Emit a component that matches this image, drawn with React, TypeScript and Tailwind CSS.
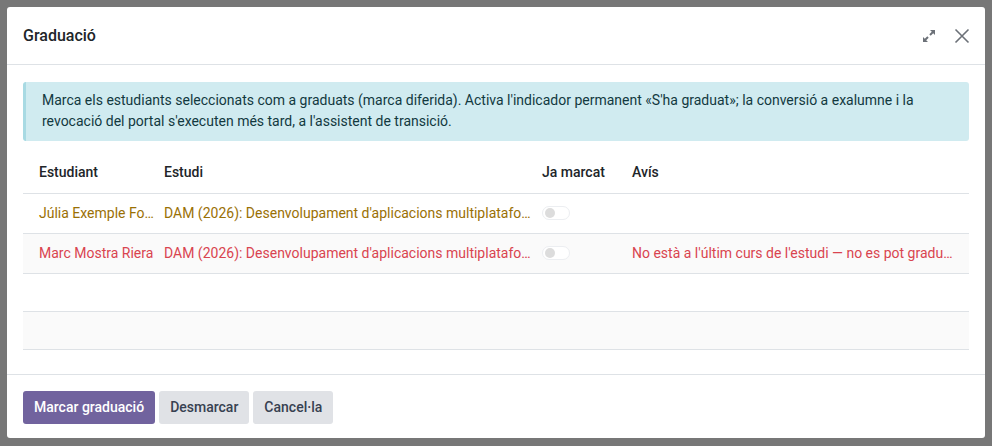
import React from "react";

const rows = [
  {
    student: "Júlia Exemple Font",
    study: "DAM (2026): Desenvolupament d'aplicacions multiplataforma",
    warning: "",
    color: "text-[#9a7005]",
  },
  {
    student: "Marc Mostra Riera",
    study: "DAM (2026): Desenvolupament d'aplicacions multiplataforma",
    warning: "No està a l'últim curs de l'estudi — no es pot graduar encara",
    color: "text-[#d9444f]",
  },
];

const Toggle = () => (
  <div className="w-[28px] h-[14px] rounded-full border border-[#eceef1] bg-white flex items-center pl-[2px]">
    <div className="w-[10px] h-[10px] rounded-full bg-[#dcdcdc]" />
  </div>
);

export default function App() {
  return (
    <div className="w-[992px] h-[446px] bg-[#777777] p-[7px] font-['Roboto',sans-serif] text-[14px] text-[#212529]">
      <div className="w-[978px] h-[431px] bg-white rounded-[3px] flex flex-col">
        {/* header */}
        <div className="h-[58px] border-b border-[#dee2e6] flex items-center pl-[16px] pr-[15px]">
          <h4 className="text-[16px] font-medium text-[#212529] flex-1">Graduació</h4>
          <svg width="14" height="14" viewBox="0 0 14 14" className="mr-[18px] mt-[1px]">
            <path d="M8 1h5v5l-1.8-1.8-2.5 2.5-1.4-1.4 2.5-2.5z" fill="#6c7178" />
            <path d="M6 13H1V8l1.8 1.8 2.5-2.5 1.4 1.4-2.5 2.5z" fill="#6c7178" />
          </svg>
          <svg width="16" height="16" viewBox="0 0 16 16">
            <path d="M1.5 1.5l13 13M14.5 1.5l-13 13" stroke="#6c7178" strokeWidth="1.6" />
          </svg>
        </div>

        {/* body */}
        <div className="flex-1 px-[16px] pt-[17px]">
          <div className="bg-[#d0ebf0] border-l-[3px] border-[#a8dae3] rounded-[3px] px-[16px] pt-[8px] pb-[9px] leading-[21px] text-[#12393f]">
            Marca els estudiants seleccionats com a graduats (marca diferida). Activa l'indicador permanent «S'ha graduat»; la conversió a exalumne i la revocació del portal s'executen més tard, a l'assistent de transició.
          </div>

          <table className="w-full mt-[12px] table-fixed border-collapse">
            <colgroup>
              <col className="w-[133px]" />
              <col className="w-[378px]" />
              <col className="w-[90px]" />
              <col />
            </colgroup>
            <thead>
              <tr className="h-[40px] border-b border-[#dee2e6]">
                <th className="text-left font-medium pl-[16px]">Estudiant</th>
                <th className="text-left font-medium pl-[8px]">Estudi</th>
                <th className="text-left font-medium pl-[8px]">Ja marcat</th>
                <th className="text-left font-medium pl-[8px]">Avís</th>
              </tr>
            </thead>
            <tbody>
              {rows.map((r, i) => (
                <tr key={i} className={`h-[40px] border-b border-[#dee2e6] ${r.color} ${i % 2 === 1 ? "bg-[#fafafa]" : ""}`}>
                  <td className="pl-[16px] truncate">{r.student}</td>
                  <td className="pl-[8px] pr-[3px] truncate">{r.study}</td>
                  <td className="pl-[8px]">
                    <Toggle />
                  </td>
                  <td className="pl-[8px] pr-[16px] truncate">{r.warning}</td>
                </tr>
              ))}
              <tr className="h-[38px] border-b border-[#dee2e6]">
                <td colSpan={4}></td>
              </tr>
              <tr className="h-[38px] border-b border-[#dee2e6] bg-[#fafafa]">
                <td colSpan={4}></td>
              </tr>
            </tbody>
          </table>
        </div>

        {/* footer */}
        <div className="h-[64px] border-t border-[#dee2e6] flex items-start pt-[16px] px-[16px] gap-[4px]">
          <button className="h-[33px] px-[11px] rounded-[3px] bg-[#71639e] text-white font-medium">Marcar graduació</button>
          <button className="h-[33px] px-[11px] rounded-[3px] bg-[#e0e2e6] text-[#374151] font-medium">Desmarcar</button>
          <button className="h-[33px] px-[11px] rounded-[3px] bg-[#e0e2e6] text-[#374151] font-medium">Cancel·la</button>
        </div>
      </div>
    </div>
  );
}
